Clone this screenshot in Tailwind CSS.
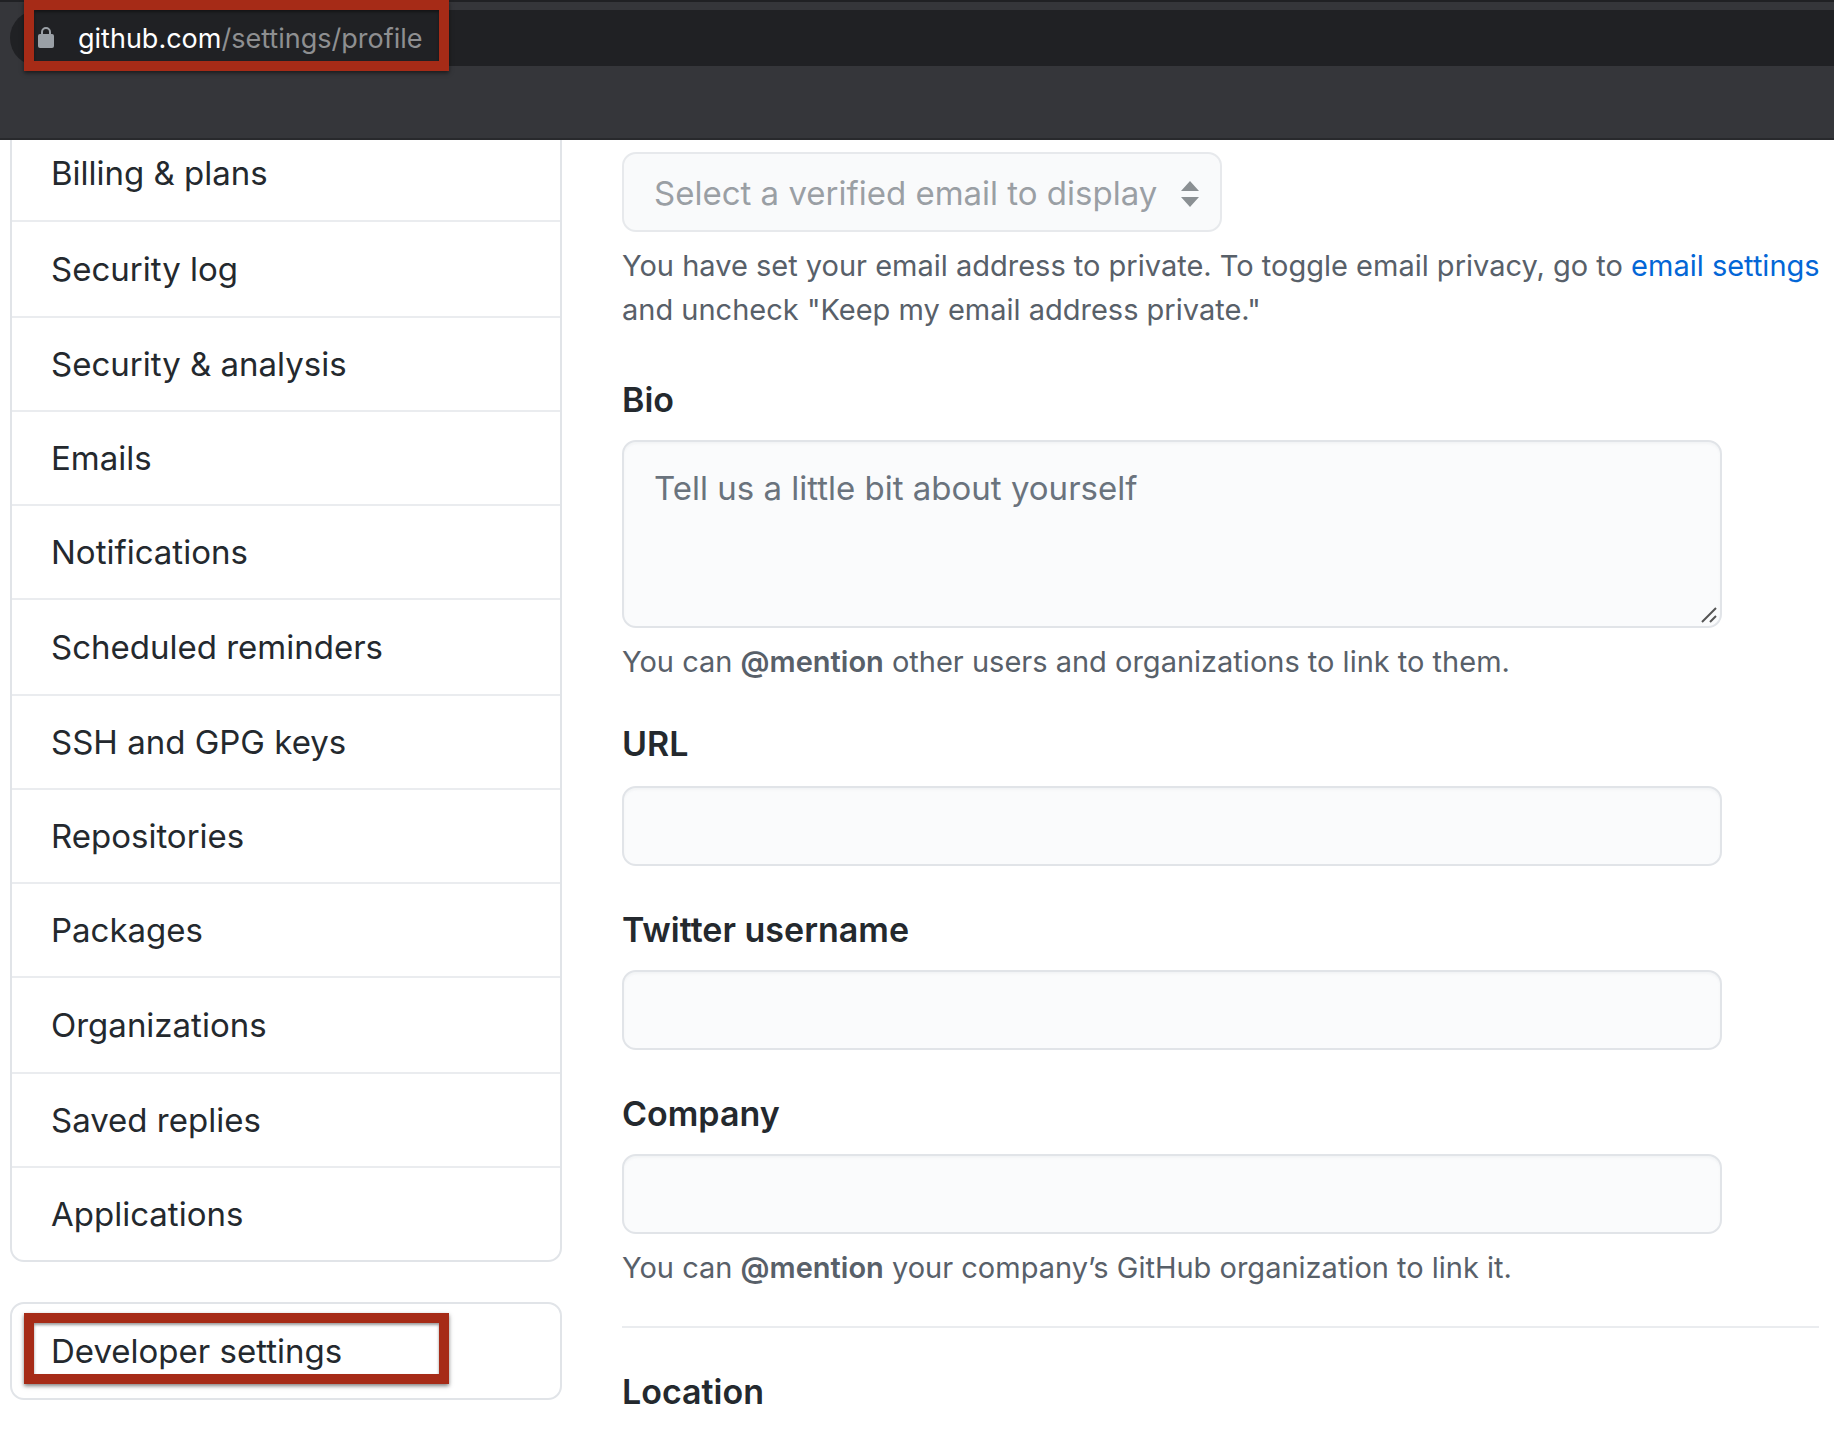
<!DOCTYPE html>
<html lang="en">
<head>
<meta charset="utf-8">
<title>Your Profile</title>
<script src="https://cdn.jsdelivr.net/npm/@tailwindcss/browser@4"></script>
</head>
<body class="min-h-screen bg-white font-['Inter','Liberation_Sans',sans-serif] text-[#24292e]">
  <header class="relative h-[140px] border-t-2 border-b-2 border-[#202124] border-b-[#28292c] bg-[#35363a] pt-2 pl-[10px]">
    <div class="flex h-14 items-center rounded-l-full bg-[#202124] pl-7">
      <svg class="h-[22px] w-4" viewBox="0 0 16 22" aria-hidden="true">
        <rect x="0" y="7" width="16" height="14" rx="2" fill="#9aa0a6"/>
        <path d="M4 8V5a4 4 0 0 1 8 0v3" fill="none" stroke="#9aa0a6" stroke-width="2"/>
      </svg>
      <span class="ml-6 pt-0.5 text-[27px] leading-9 text-[#8e8f91]"><span class="text-white">github.com</span>/settings/profile</span>
    </div>
    <div class="absolute -top-0.5 left-6 h-[71px] w-[425px] border-[10px] border-[#a62b17] shadow-[0_2px_4px_rgba(0,0,0,0.5),inset_0_2px_3px_rgba(0,0,0,0.4)]"></div>
  </header>

  <main class="flex overflow-hidden pr-[15px] pl-[10px]">
    <div class="w-[552px] shrink-0">
      <nav class="-mt-4 rounded-[14px] border-2 border-[#e1e4e8] text-[33px] leading-[52px]" aria-label="Account settings">
        <a href="#" class="flex h-24 items-center border-b-2 border-[#eaecef] pl-[39px]">Billing &amp; plans</a>
        <a href="#" class="flex h-24 items-center border-b-2 border-[#eaecef] pl-[39px]">Security log</a>
        <a href="#" class="flex h-[94px] items-center border-b-2 border-[#eaecef] pl-[39px]">Security &amp; analysis</a>
        <a href="#" class="flex h-[94px] items-center border-b-2 border-[#eaecef] pl-[39px]">Emails</a>
        <a href="#" class="flex h-[94px] items-center border-b-2 border-[#eaecef] pl-[39px]">Notifications</a>
        <a href="#" class="flex h-24 items-center border-b-2 border-[#eaecef] pl-[39px]">Scheduled reminders</a>
        <a href="#" class="flex h-[94px] items-center border-b-2 border-[#eaecef] pl-[39px]">SSH and GPG keys</a>
        <a href="#" class="flex h-[94px] items-center border-b-2 border-[#eaecef] pl-[39px]">Repositories</a>
        <a href="#" class="flex h-[94px] items-center border-b-2 border-[#eaecef] pl-[39px]">Packages</a>
        <a href="#" class="flex h-24 items-center border-b-2 border-[#eaecef] pl-[39px]">Organizations</a>
        <a href="#" class="flex h-[94px] items-center border-b-2 border-[#eaecef] pl-[39px]">Saved replies</a>
        <a href="#" class="flex h-[92px] items-center pl-[39px]">Applications</a>
      </nav>
      <nav class="relative mt-10 rounded-[14px] border-2 border-[#e1e4e8] text-[33px] leading-[52px]" aria-label="Developer settings">
        <a href="#" class="flex h-[94px] items-center pl-[39px]">Developer settings</a>
        <div class="pointer-events-none absolute top-[9px] left-3 h-[71px] w-[425px] border-[10px] border-[#a62b17] shadow-[0_2px_4px_rgba(0,0,0,0.5),inset_0_2px_3px_rgba(0,0,0,0.4)]"></div>
      </nav>
    </div>

    <form class="ml-[60px] min-w-0 flex-1 pt-3">
      <div class="relative w-[600px] opacity-60">
        <select disabled aria-label="Public email" class="h-20 w-full appearance-none rounded-[14px] border-2 border-[#d8dce1] bg-[#f6f8fa] pt-0.5 pl-[30px] text-[33px] leading-[52px] text-[#586069] opacity-100">
          <option>Select a verified email to display</option>
        </select>
        <svg class="absolute top-[29px] right-[23px] h-[26px] w-[18px]" viewBox="0 0 18 26" aria-hidden="true"><path d="M9 0l9 10H0zM9 26l9-10H0z" fill="#3f484d"/></svg>
      </div>
      <p class="mt-3 -mr-[15px] mb-[42px] text-[29px] leading-[44px] text-[#586069]">You have set your email address to private. To toggle email privacy, go to <a href="#" class="text-[#0366d6]">email settings</a> and uncheck "Keep my email address private."</p>

      <label for="bio" class="mb-3.5 block text-[34px] leading-[52px] font-semibold">Bio</label>
      <div class="relative mr-[97px]">
        <textarea id="bio" placeholder="Tell us a little bit about yourself" class="block h-[188px] w-full resize-none rounded-[14px] border-2 border-[#e1e4e8] bg-[#fafbfc] px-[30px] py-5 text-[33px] leading-[52px] shadow-[inset_0_2px_2px_rgba(225,228,232,0.3)] placeholder:text-[#6a737d]"></textarea>
        <svg class="absolute right-[5px] bottom-[5px] h-4 w-4" viewBox="0 0 16 16" aria-hidden="true"><path d="M1 15L15 1M9 15l6-6" stroke="#555" stroke-width="2"/></svg>
      </div>
      <p class="mt-3 mb-[34px] text-[29px] leading-[44px] text-[#586069]">You can <strong class="font-semibold">@mention</strong> other users and organizations to link to them.</p>

      <label for="url" class="mb-4 block text-[34px] leading-[52px] font-semibold">URL</label>
      <div class="mr-[97px] mb-[38px]"><input id="url" type="url" class="block h-20 w-full rounded-[14px] border-2 border-[#e1e4e8] bg-[#fafbfc] px-[30px] text-[33px] shadow-[inset_0_2px_2px_rgba(225,228,232,0.3)]"></div>

      <label for="twitter" class="mb-3.5 block text-[34px] leading-[52px] font-semibold">Twitter username</label>
      <div class="mr-[97px] mb-[38px]"><input id="twitter" type="text" class="block h-20 w-full rounded-[14px] border-2 border-[#e1e4e8] bg-[#fafbfc] px-[30px] text-[33px] shadow-[inset_0_2px_2px_rgba(225,228,232,0.3)]"></div>

      <label for="company" class="mb-3.5 block text-[34px] leading-[52px] font-semibold">Company</label>
      <div class="mr-[97px]"><input id="company" type="text" class="block h-20 w-full rounded-[14px] border-2 border-[#e1e4e8] bg-[#fafbfc] px-[30px] text-[33px] shadow-[inset_0_2px_2px_rgba(225,228,232,0.3)]"></div>
      <p class="mt-3 text-[29px] leading-[44px] text-[#586069]">You can <strong class="font-semibold">@mention</strong> your company’s GitHub organization to link it.</p>

      <hr class="mt-9 mb-[38px] border-t-2 border-[#eaecef]">
      <h2 class="text-[34px] leading-[52px] font-semibold">Location</h2>
    </form>
  </main>
</body>
</html>
